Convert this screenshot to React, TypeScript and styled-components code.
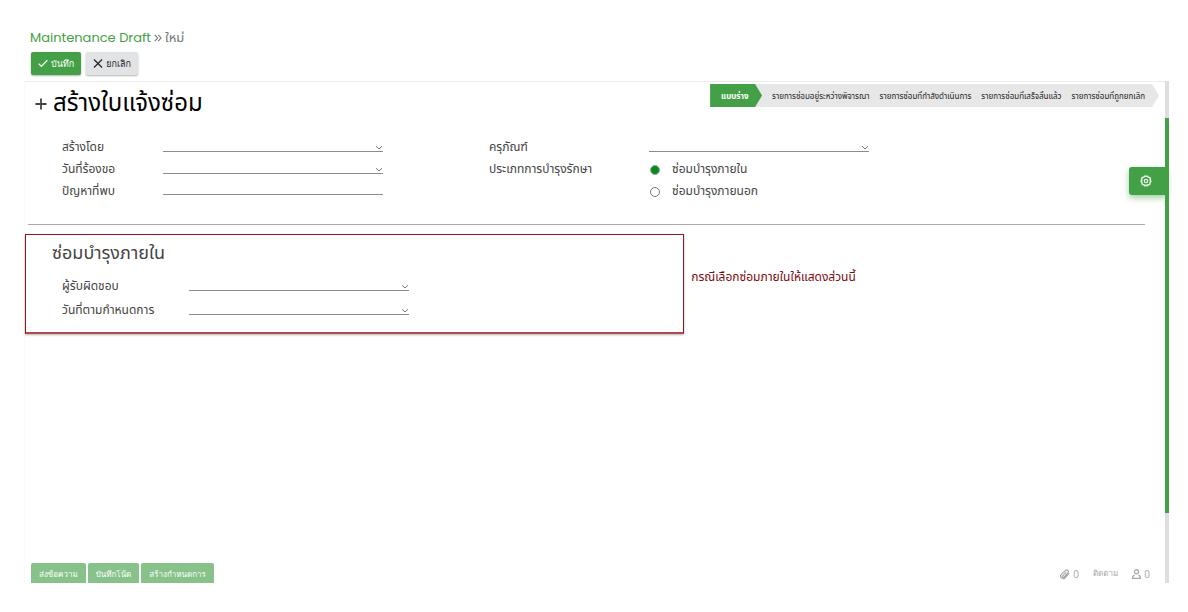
import React, { useState } from "react";
import styled, { createGlobalStyle } from "styled-components";

const GREEN = "#43a047";
const THAI = '"Noto Sans Thai", "Noto Sans", sans-serif';
const BITMAP = '"Tahoma", "Loma", "DejaVu Sans", sans-serif';

const GlobalStyle = createGlobalStyle`
  *, *::before, *::after { box-sizing: border-box; }
  body { margin: 0; background: #fff; color: #444; font-family: ${THAI}; font-size: 12px; }
  button, input, select { font: inherit; color: inherit; }
`;

const Page = styled.div`
  display: flex;
  flex-direction: column;
  min-height: 100vh;
  padding: 28px 19px 29px 24px;
`;

const TopBar = styled.header`
  padding: 0 7px 6px 6px;
`;

const Crumbs = styled.nav`
  display: flex;
  align-items: center;
  gap: 3px;
  height: 20px;
  font-size: 13px;
  line-height: 20px;
  color: #6f7478;
`;

const CrumbLink = styled.a`
  color: ${GREEN};
  font-family: Poppins, "Open Sans", sans-serif;
  font-size: 13px;
  text-decoration: none;
`;

const Actions = styled.div`
  display: flex;
  gap: 5px;
  padding: 4px 0 0 1px;
`;

const ActionButton = styled.button<{ $primary?: boolean }>`
  display: flex;
  align-items: center;
  justify-content: center;
  gap: 3px;
  height: 23px;
  padding: 0 7px;
  border: 0;
  border-radius: 2px;
  background: ${(p) => (p.$primary ? GREEN : "#e2e3e5")};
  color: ${(p) => (p.$primary ? "#fff" : "#212529")};
  box-shadow: 0 1px 2px rgba(0, 0, 0, 0.3);
  font-family: ${BITMAP};
  font-size: 9px;
  font-weight: 500;
  white-space: nowrap;
`;

const Frame = styled.div`
  position: relative;
  display: flex;
  flex: 1;
`;

const Sheet = styled.main`
  display: flex;
  flex: 1;
  flex-direction: column;
  min-width: 0;
  border-top: 1px solid #ebebeb;
  border-left: 1px solid #fafafa;
`;

const Track = styled.div`
  display: flex;
  flex-direction: column;
  width: 4px;
  padding: 37px 0 70px;
  background: #dedede;
`;

const Thumb = styled.div`
  flex: 1;
  background: ${GREEN};
`;

const TitleRow = styled.div`
  display: flex;
  align-items: flex-start;
  justify-content: space-between;
  padding: 2px 6px 0 10px;
`;

const Title = styled.h1`
  display: flex;
  align-items: center;
  gap: 6px;
  height: 40px;
  margin: 0;
  color: #000;
  font-size: 24px;
  font-weight: 400;
  line-height: 40px;
  white-space: nowrap;
`;

const Steps = styled.ol`
  display: flex;
  height: 23px;
  margin: 0;
  padding: 0 14px 0 0;
  background: #e7e7e7;
  clip-path: polygon(0 0, calc(100% - 7px) 0, 100% 50%, calc(100% - 7px) 100%, 0 100%);
  list-style: none;
  color: #222;
  font-size: 8px;
  line-height: 26px;
  white-space: nowrap;
`;

const Step = styled.li<{ $active?: boolean }>`
  margin-left: ${(p) => (p.$active ? "0" : "10px")};
  ${(p) =>
    p.$active &&
    `
    width: 52px;
    padding-left: 11px;
    background: ${GREEN};
    color: #fff;
    font-weight: 700;
    clip-path: polygon(0 0, calc(100% - 7px) 0, 100% 50%, calc(100% - 7px) 100%, 0 100%);
  `}
`;

const FormColumns = styled.div`
  display: grid;
  grid-template-columns: 427px 1fr;
  margin: 0 20px 0 3px;
  padding: 12px 0 22px 34px;
  border-bottom: 1px solid #aaa;
`;

const Fields = styled.div<{ $label: number; $row: number }>`
  display: grid;
  grid-template-columns: ${(p) => p.$label}px 220px;
  grid-auto-rows: ${(p) => p.$row}px;
  align-items: center;
  align-content: start;
  line-height: 22px;
`;

const Picker = styled.span`
  display: grid;
  align-items: end;
  justify-items: end;
  height: 10px;
  border-bottom: 1px solid #8c8c8c;
  & > * { grid-area: 1 / 1; }
`;

const Select = styled.select`
  width: 100%;
  height: 9px;
  padding: 0;
  border: 0;
  appearance: none;
  background: transparent;
`;

const TextInput = styled.input`
  width: 100%;
  height: 8px;
  padding: 0;
  border: 0;
  border-bottom: 1px solid #8c8c8c;
  background: transparent;
`;

const RadioGroup = styled.div`
  display: flex;
  flex-direction: column;
  align-self: start;
`;

const RadioLabel = styled.label`
  display: flex;
  align-items: center;
  gap: 12px;
  height: 22px;
  white-space: nowrap;
`;

const Radio = styled.input`
  width: 10px;
  height: 10px;
  margin: 2px 0 0 1px;
  appearance: none;
  border: 1px solid #777;
  border-radius: 50%;
  background: #fff;
  &:checked { border-color: #8fae92; background: #0a8a1c; }
`;

const Lower = styled.div`
  display: flex;
  align-items: flex-start;
  gap: 7px;
  margin-top: 9px;
`;

const Panel = styled.section`
  width: calc(58% - 2px);
  height: 100px;
  padding: 5px 26px 0;
  border: 1px solid #8b1a1e;
  border-bottom: 2px solid #b0484c;
  box-shadow: 0 1px 2px rgba(0, 0, 0, 0.3);
`;

const PanelTitle = styled.h2`
  height: 28px;
  margin: 0 0 6px;
  font-size: 18px;
  font-weight: 400;
  line-height: 28px;
`;

const PanelFields = styled.div`
  padding-left: 10px;
`;

const Note = styled.p`
  margin: 32px 0 0;
  color: #7d0a10;
  line-height: 22px;
  white-space: nowrap;
`;

const Chatter = styled.footer`
  display: flex;
  align-items: center;
  justify-content: space-between;
  height: 20px;
  margin-top: auto;
  padding: 0 15px 0 6px;
  font-family: ${BITMAP};
  font-size: 8px;
  font-weight: 500;
`;

const ChatActions = styled.div`
  display: flex;
  gap: 2px;
`;

const ChatButton = styled.button`
  height: 20px;
  padding: 2px 8px 0;
  border: 0;
  border-radius: 2px 2px 0 0;
  background: #88c28b;
  color: #fff;
  white-space: nowrap;
`;

const Counters = styled.div`
  display: flex;
  gap: 14px;
  padding-top: 2px;
  color: #a3a7ab;
`;

const Counter = styled.button`
  display: flex;
  align-items: center;
  gap: 3px;
  padding: 0;
  border: 0;
  background: none;
  color: inherit;
  line-height: 14px;
`;

const Count = styled.span`
  font-family: "Open Sans", sans-serif;
  font-size: 10px;
  font-weight: 400;
`;

const SettingsTab = styled.button`
  position: absolute;
  top: 86px;
  right: 2px;
  display: flex;
  align-items: center;
  justify-content: center;
  width: 38px;
  height: 28px;
  padding: 0 4px 0 0;
  border: 0;
  border-radius: 3px 0 0 3px;
  background: ${GREEN};
  color: #fff;
  box-shadow: 0 3px 6px rgba(67, 160, 71, 0.5);
`;

const Chevron = () => (
  <svg width="8" height="6" viewBox="0 0 8 6" fill="none" stroke="#777" aria-hidden="true" pointerEvents="none">
    <path d="M1 1.2L4 4L7 1.2" />
  </svg>
);

const CheckIcon = () => (
  <svg width="10" height="9" viewBox="0 0 10 9" fill="none" stroke="currentColor" strokeWidth="1.2" aria-hidden="true">
    <path d="M.7 4.6L3.4 7.3L9.4 1.2" />
  </svg>
);

const CrossIcon = () => (
  <svg width="10" height="9" viewBox="0 0 10 9" fill="none" stroke="currentColor" strokeWidth="1.2" aria-hidden="true">
    <path d="M1 .5L9 8.5M9 .5L1 8.5" />
  </svg>
);

const PlusIcon = () => (
  <svg width="12" height="12" viewBox="0 0 12 12" fill="none" stroke="#444" strokeWidth="1.8" aria-hidden="true">
    <path d="M6 .5V11.5M.5 6H11.5" />
  </svg>
);

const GuillemetIcon = () => (
  <svg width="8" height="8" viewBox="0 0 8 8" fill="none" stroke="#6f7478" strokeWidth="1.1" aria-hidden="true">
    <path d="M.8 .8L3.6 4L.8 7.2M4.2 .8L7 4L4.2 7.2" />
  </svg>
);

const ClipIcon = () => (
  <svg width="10" height="11" viewBox="0 0 24 24" fill="none" stroke="currentColor" strokeWidth="2.8" aria-hidden="true">
    <path d="M21.5 9.5L12 19.8a6 6 0 0 1-9-8.2L12.5 2.6a4.2 4.2 0 0 1 6.3 6L10 18a2.2 2.2 0 0 1-3.3-3.2L15 6.5" />
  </svg>
);

const UserIcon = () => (
  <svg width="9" height="10" viewBox="0 0 9 10" fill="none" stroke="currentColor" strokeWidth="1.2" aria-hidden="true">
    <circle cx="4.5" cy="2.8" r="2.1" />
    <path d="M2.6 6.2C1.2 6.5 .6 7.4 .6 9.3H8.4C8.4 7.4 7.8 6.5 6.4 6.2" />
  </svg>
);

const GearIcon = () => (
  <svg width="12" height="12" viewBox="0 0 12 12" fill="none" stroke="currentColor" strokeWidth="1.5" strokeOpacity=".85" aria-hidden="true">
    <path d="M6 1.3L7.6 1.3L8.2 2.3L9.7 2.4L10.5 3.8L10 5L10.9 6L10.1 7.6L9.7 9.4L8.2 9.7L7.3 10.8L6 10.2L4.7 10.8L3.8 9.7L2.3 9.4L1.9 7.6L1.1 6L2 5L1.5 3.8L2.3 2.4L3.8 2.3L4.4 1.3Z" />
    <circle cx="6" cy="6" r="1.7" strokeWidth="1.2" />
  </svg>
);

const PickField = ({ id, label }: { id: string; label: string }) => (
  <>
    <label htmlFor={id}>{label}</label>
    <Picker>
      <Select id={id} defaultValue="">
        <option value="" />
      </Select>
      <Chevron />
    </Picker>
  </>
);

const waitingSteps = [
  "รายการซ่อมอยู่ระหว่างพิจารณา",
  "รายการซ่อมที่กำลังดำเนินการ",
  "รายการซ่อมที่เสร็จสิ้นแล้ว",
  "รายการซ่อมที่ถูกยกเลิก",
];

export default function App() {
  const [kind, setKind] = useState("internal");
  return (
    <Page>
      <GlobalStyle />
      <TopBar>
        <Crumbs>
          <CrumbLink href="#drafts">Maintenance Draft</CrumbLink>
          <GuillemetIcon />
          <span>ใหม่</span>
        </Crumbs>
        <Actions>
          <ActionButton $primary><CheckIcon />บันทึก</ActionButton>
          <ActionButton><CrossIcon />ยกเลิก</ActionButton>
        </Actions>
      </TopBar>
      <Frame>
        <Sheet>
          <TitleRow>
            <Title><PlusIcon />สร้างใบแจ้งซ่อม</Title>
            <Steps>
              <Step $active>แบบร่าง</Step>
              {waitingSteps.map((s) => <Step key={s}>{s}</Step>)}
            </Steps>
          </TitleRow>
          <FormColumns>
            <Fields $label={101} $row={22}>
              <PickField id="creator" label="สร้างโดย" />
              <PickField id="request-date" label="วันที่ร้องขอ" />
              <label htmlFor="problem">ปัญหาที่พบ</label>
              <TextInput id="problem" />
            </Fields>
            <Fields $label={160} $row={22}>
              <PickField id="asset" label="ครุภัณฑ์" />
              <span id="kind-label">ประเภทการบำรุงรักษา</span>
              <RadioGroup role="radiogroup" aria-labelledby="kind-label">
                <RadioLabel>
                  <Radio type="radio" name="kind" checked={kind === "internal"} onChange={() => setKind("internal")} />
                  ซ่อมบำรุงภายใน
                </RadioLabel>
                <RadioLabel>
                  <Radio type="radio" name="kind" checked={kind === "external"} onChange={() => setKind("external")} />
                  ซ่อมบำรุงภายนอก
                </RadioLabel>
              </RadioGroup>
            </Fields>
          </FormColumns>
          <Lower>
            <Panel>
              <PanelTitle>ซ่อมบำรุงภายใน</PanelTitle>
              <PanelFields>
                <Fields $label={127} $row={24}>
                  <PickField id="owner" label="ผู้รับผิดชอบ" />
                  <PickField id="due" label="วันที่ตามกำหนดการ" />
                </Fields>
              </PanelFields>
            </Panel>
            <Note>กรณีเลือกซ่อมภายในให้แสดงส่วนนี้</Note>
          </Lower>
          <Chatter>
            <ChatActions>
              <ChatButton>ส่งข้อความ</ChatButton>
              <ChatButton>บันทึกโน้ต</ChatButton>
              <ChatButton>สร้างกำหนดการ</ChatButton>
            </ChatActions>
            <Counters>
              <Counter aria-label="ไฟล์แนบ"><ClipIcon /><Count>0</Count></Counter>
              <Counter>ติดตาม</Counter>
              <Counter aria-label="ผู้ติดตาม"><UserIcon /><Count>0</Count></Counter>
            </Counters>
          </Chatter>
        </Sheet>
        <Track><Thumb /></Track>
        <SettingsTab aria-label="ตั้งค่า"><GearIcon /></SettingsTab>
      </Frame>
    </Page>
  );
}
